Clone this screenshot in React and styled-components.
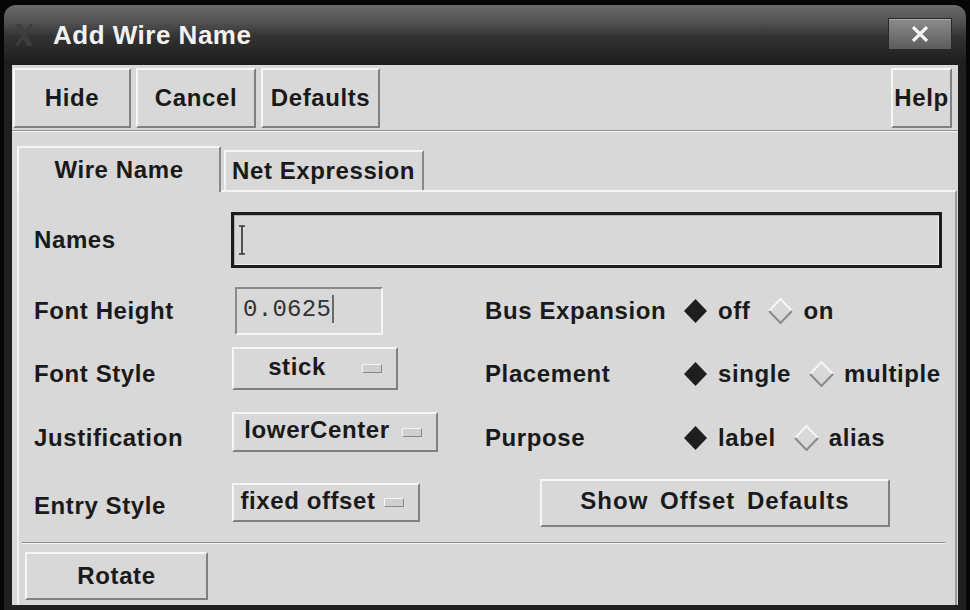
import styled, { createGlobalStyle } from "styled-components";

const GlobalStyle = createGlobalStyle`
  html, body {
    margin: 0;
    padding: 0;
    background: #000;
  }
  body {
    font-family: "Liberation Sans", Arial, sans-serif;
  }
`;

const Screen = styled.div`
  width: 970px;
  height: 610px;
  box-sizing: border-box;
  padding: 5px 4px 0;
  background: #060606;
  overflow: hidden;
`;

const Window = styled.div`
  height: 605px;
  box-sizing: border-box;
  padding-bottom: 5px;
  display: flex;
  flex-direction: column;
  background: #1f1f1f;
  border-radius: 12px 12px 0 0;
  overflow: hidden;
`;

const TitleBar = styled.div`
  height: 60px;
  flex-shrink: 0;
  display: flex;
  align-items: center;
  padding: 0 14px 0 10px;
  background: linear-gradient(#6b6b6b 0%, #505050 30%, #333 52%, #1c1c1c 100%);
`;

const TitleText = styled.div`
  margin-left: 19px;
  color: #f2f2f2;
  font-size: 26px;
  font-weight: 700;
  letter-spacing: 0.5px;
`;

const CloseButton = styled.div`
  margin-left: auto;
  margin-top: -2px;
  width: 64px;
  height: 32px;
  box-sizing: border-box;
  display: flex;
  align-items: center;
  justify-content: center;
  border: 1px solid #2a2a2a;
  background: linear-gradient(#8c8c8c, #5c5c5c);
  box-shadow: inset 0 1px 0 #a8a8a8;
`;

const Body = styled.div`
  flex: 1;
  margin: 0 8px;
  display: flex;
  flex-direction: column;
  background: #d8d8d8;
  color: #1a1a1a;
  font-size: 24px;
  font-weight: 700;
  letter-spacing: 0.6px;
`;

const Toolbar = styled.div`
  height: 66px;
  flex-shrink: 0;
  box-sizing: border-box;
  display: flex;
  gap: 5px;
  padding: 3px 6px 0 1px;
  border-bottom: 1px solid #8e8e8e;
  box-shadow: 0 1px 0 #f4f4f4;
`;

const Bevel = styled.div`
  box-sizing: border-box;
  display: flex;
  align-items: center;
  justify-content: center;
  background: #d8d8d8;
  border: 2px solid;
  border-color: #f6f6f6 #808080 #808080 #f6f6f6;
  white-space: nowrap;
`;

const ToolButton = styled(Bevel)`
  width: ${(p) => p.$w}px;
  height: 60px;
  margin-left: ${(p) => (p.$right ? "auto" : "0")};
`;

const TabArea = styled.div`
  flex: 1;
  display: flex;
  flex-direction: column;
  padding: 15px 1px 0 5px;
`;

const TabRow = styled.div`
  display: flex;
  align-items: flex-end;
  height: 44px;
  gap: 3px;
`;

const Tab = styled.div`
  box-sizing: border-box;
  display: flex;
  align-items: center;
  background: #d8d8d8;
  border-style: solid;
  border-color: #f4f4f4 #888 #888 #f4f4f4;
  ${(p) =>
    p.$active
      ? `
    width: 204px;
    height: 46px;
    margin-bottom: -2px;
    border-width: 2px 2px 0 2px;
    justify-content: center;
    position: relative;
    z-index: 1;
  `
      : `
    width: 200px;
    height: 40px;
    border-width: 2px 2px 0 2px;
    padding-left: 6px;
  `}
`;

const Panel = styled.div`
  flex: 1;
  display: flex;
  flex-direction: column;
  padding: 20px 13px 0 15px;
  border-top: 2px solid #f4f4f4;
  border-left: 2px solid #f0f0f0;
  border-right: 2px solid #9a9a9a;
`;

const Row = styled.div`
  display: flex;
  align-items: center;
  height: ${(p) => p.$h}px;
  margin-top: ${(p) => p.$mt || 0}px;
`;

const Label = styled.div`
  width: ${(p) => p.$w}px;
  flex-shrink: 0;
  white-space: nowrap;
`;

const Cell = styled.div`
  width: 254px;
  flex-shrink: 0;
  align-self: stretch;
  display: flex;
  align-items: flex-start;
`;

const NameInput = styled.div`
  flex: 1;
  height: 56px;
  box-sizing: border-box;
  display: flex;
  align-items: center;
  padding-left: 4px;
  border: 3px solid #1c1c1c;
  box-shadow: inset 1px 1px 0 #b0b0b0, inset -1px -1px 0 #eeeeee;
`;

const NumberField = styled.div`
  margin-left: 4px;
  width: 148px;
  height: 48px;
  box-sizing: border-box;
  display: flex;
  align-items: center;
  padding: 0 0 4px 6px;
  border: 2px solid;
  border-color: #8a8a8a #f4f4f4 #f4f4f4 #8a8a8a;
  font-family: "Liberation Mono", "Courier New", monospace;
  font-weight: 400;
  font-size: 24px;
  letter-spacing: 0.3px;
  color: #333;
`;

const Caret = styled.span`
  width: 2px;
  height: 28px;
  margin-left: 1px;
  background: #6a6a6a;
`;

const Dropdown = styled(Bevel)`
  width: ${(p) => p.$w}px;
  height: ${(p) => p.$h}px;
  margin: ${(p) => p.$mt || 0}px 0 0 1px;
  padding: 0 14px 0 4px;
  gap: 6px;
`;

const DropText = styled.span`
  flex: 1;
  text-align: center;
  padding-bottom: 4px;
`;

const DropMark = styled.span`
  width: 18px;
  height: 7px;
  flex-shrink: 0;
  background: #cfcfcf;
  border: 1px solid;
  border-color: #f6f6f6 #8a8a8a #8a8a8a #f6f6f6;
`;

const RadioGroup = styled.div`
  display: flex;
  align-items: center;
  gap: 18px;
`;

const RadioOption = styled.div`
  display: flex;
  align-items: center;
  gap: 10px;
`;

const WideButton = styled(Bevel)`
  width: 350px;
  height: 48px;
  margin-left: 55px;
  align-self: flex-start;
  word-spacing: 4px;
  letter-spacing: 1px;
  padding-bottom: 4px;
`;

const Separator = styled.div`
  height: 1px;
  margin: 9px -3px 0 -12px;
  background: #8a8a8a;
  box-shadow: 0 1px 0 #f4f4f4;
`;

const RotateButton = styled(Bevel)`
  width: 183px;
  height: 48px;
  margin: 9px 0 0 -9px;
`;

function XLogo() {
  return (
    <svg width="20" height="24" viewBox="0 0 20 24">
      <path d="M1 1 h6 l12 22 h-6 z" fill="#3e3e3e" />
      <path d="M19 1 h-3 l-15 22 h3 z" fill="#3e3e3e" />
    </svg>
  );
}

function CloseIcon() {
  return (
    <svg width="18" height="16" viewBox="0 0 18 16">
      <path d="M2 1 L16 15 M16 1 L2 15" stroke="#f4f4f4" strokeWidth="3.2" />
    </svg>
  );
}

function IBeam() {
  return (
    <svg width="8" height="30" viewBox="0 0 8 30">
      <path d="M1 1 h6 M4 1 v28 M1 29 h6" stroke="#333" strokeWidth="1.6" fill="none" />
    </svg>
  );
}

function Diamond({ on }) {
  return (
    <svg width="25" height="26" viewBox="0 0 25 26">
      {on ? (
        <polygon points="12.5,1 24,13 12.5,25 1,13" fill="#1e1e1e" />
      ) : (
        <>
          <polyline points="1,13 12.5,1 24,13" stroke="#f6f6f6" strokeWidth="2" fill="none" />
          <polyline points="1,13 12.5,25 24,13" stroke="#8a8a8a" strokeWidth="2" fill="none" />
        </>
      )}
    </svg>
  );
}

function Radios({ options }) {
  return (
    <RadioGroup>
      {options.map((o, i) => (
        <RadioOption key={o}>
          <Diamond on={i === 0} />
          {o}
        </RadioOption>
      ))}
    </RadioGroup>
  );
}

export default function App() {
  return (
    <Screen>
      <GlobalStyle />
      <Window>
        <TitleBar>
          <XLogo />
          <TitleText>Add Wire Name</TitleText>
          <CloseButton>
            <CloseIcon />
          </CloseButton>
        </TitleBar>
        <Body>
          <Toolbar>
            <ToolButton $w={118}>Hide</ToolButton>
            <ToolButton $w={120}>Cancel</ToolButton>
            <ToolButton $w={119}>Defaults</ToolButton>
            <ToolButton $w={61} $right>Help</ToolButton>
          </Toolbar>
          <TabArea>
            <TabRow>
              <Tab $active>Wire Name</Tab>
              <Tab>Net Expression</Tab>
            </TabRow>
            <Panel>
              <Row $h={56}>
                <Label $w={197}>Names</Label>
                <NameInput>
                  <IBeam />
                </NameInput>
              </Row>
              <Row $h={48} $mt={19}>
                <Label $w={197}>Font Height</Label>
                <Cell>
                  <NumberField>
                    0.0625
                    <Caret />
                  </NumberField>
                </Cell>
                <Label $w={198}>Bus Expansion</Label>
                <Radios options={["off", "on"]} />
              </Row>
              <Row $h={54} $mt={12}>
                <Label $w={197}>Font Style</Label>
                <Cell>
                  <Dropdown $w={166} $h={43}>
                    <DropText>stick</DropText>
                    <DropMark />
                  </Dropdown>
                </Cell>
                <Label $w={198}>Placement</Label>
                <Radios options={["single", "multiple"]} />
              </Row>
              <Row $h={51} $mt={11}>
                <Label $w={197}>Justification</Label>
                <Cell>
                  <Dropdown $w={206} $h={40}>
                    <DropText>lowerCenter</DropText>
                    <DropMark />
                  </Dropdown>
                </Cell>
                <Label $w={198}>Purpose</Label>
                <Radios options={["label", "alias"]} />
              </Row>
              <Row $h={54} $mt={16}>
                <Label $w={197}>Entry Style</Label>
                <Cell>
                  <Dropdown $w={188} $h={39} $mt={4}>
                    <DropText>fixed offset</DropText>
                    <DropMark />
                  </Dropdown>
                </Cell>
                <WideButton>Show Offset Defaults</WideButton>
              </Row>
              <Separator />
              <RotateButton>Rotate</RotateButton>
            </Panel>
          </TabArea>
        </Body>
      </Window>
    </Screen>
  );
}
